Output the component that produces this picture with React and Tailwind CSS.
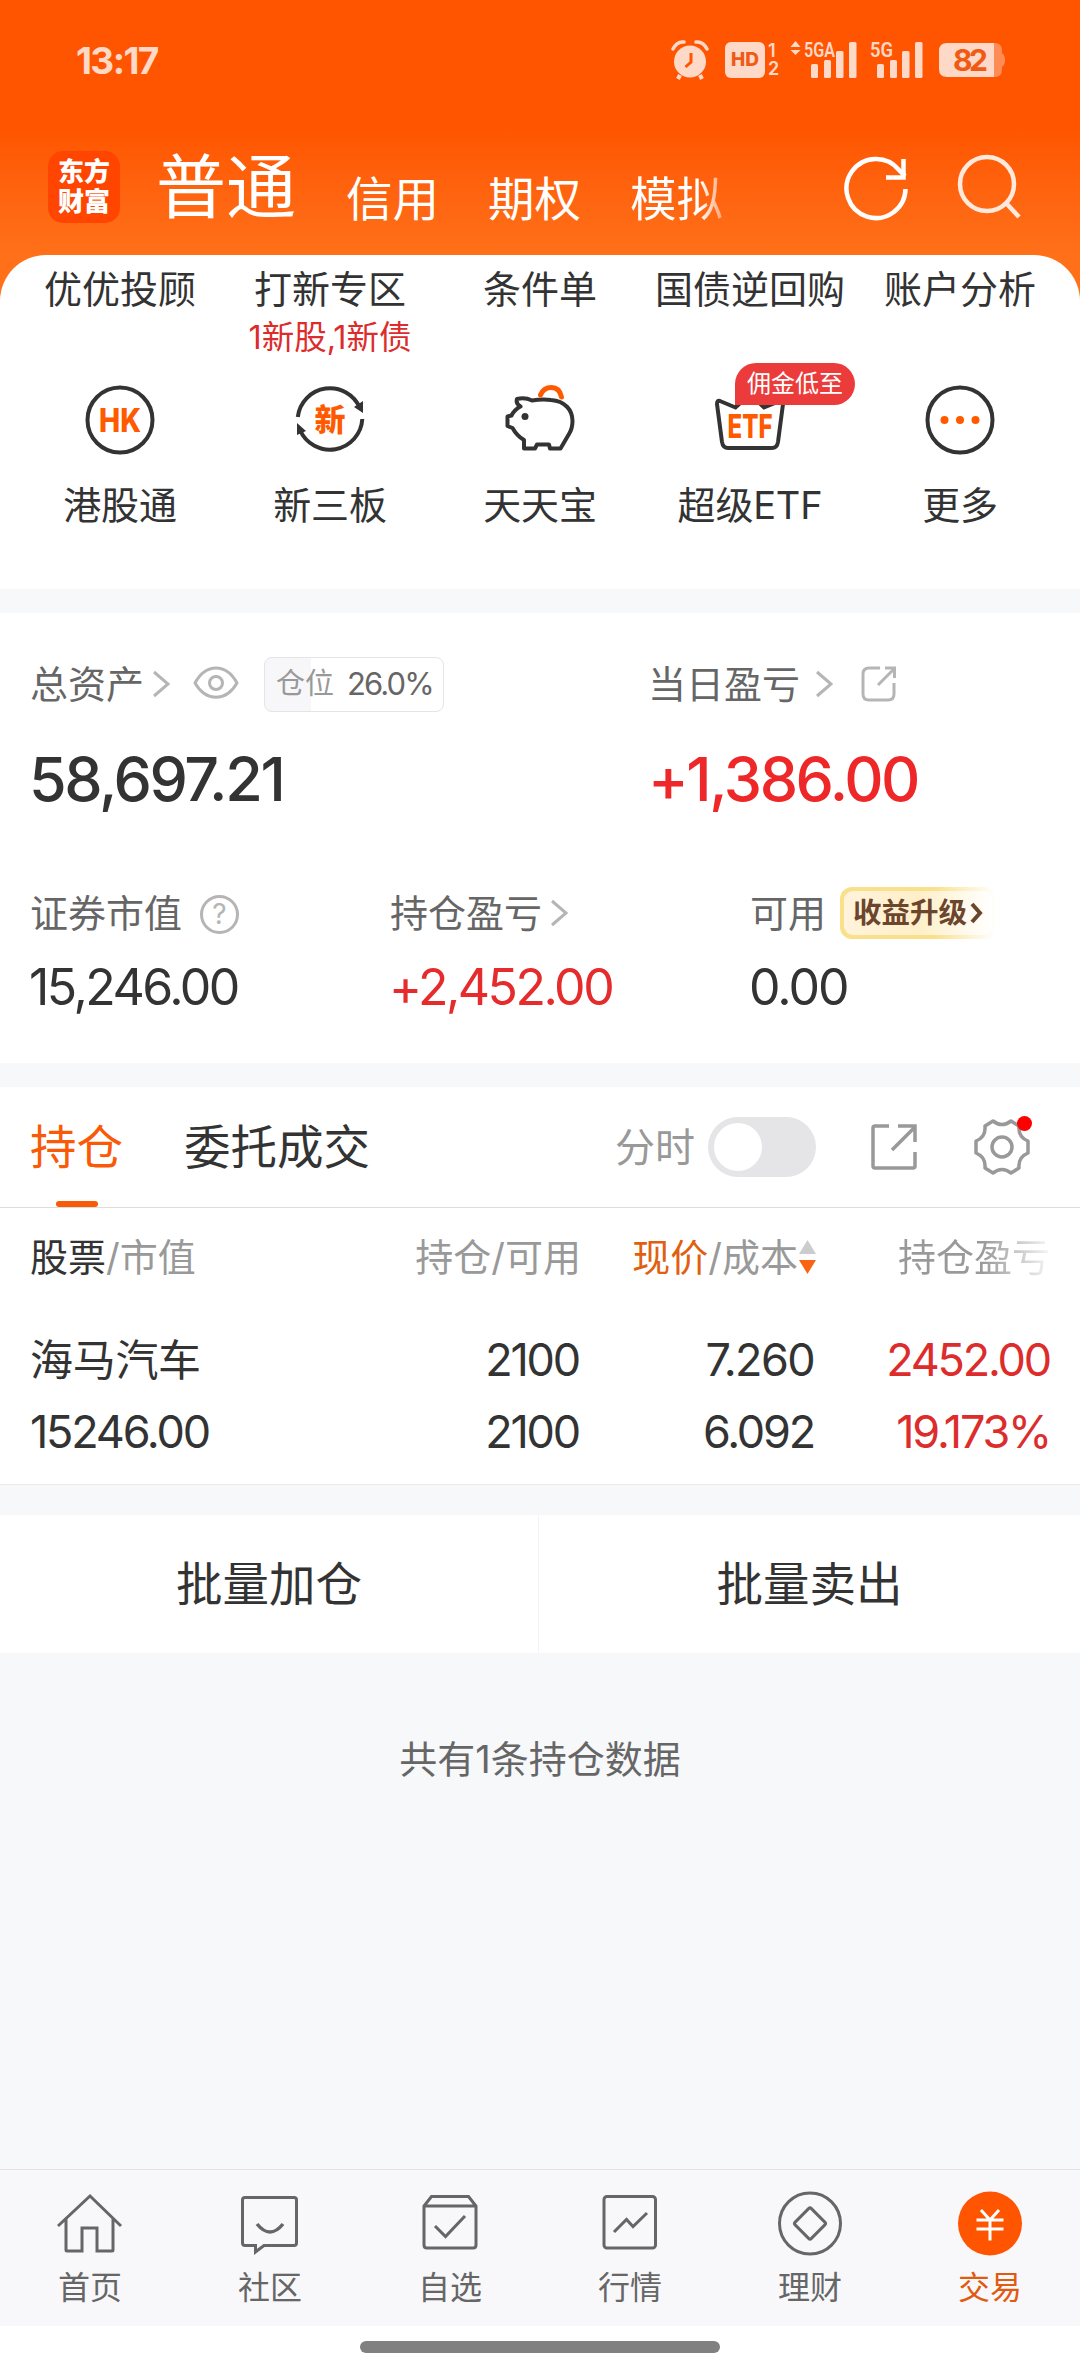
import React from 'react';

const shortcuts = [
  { top: "优优投顾", label: "港股通", icon: "hk" },
  { top: "打新专区", note: "1新股,1新债", label: "新三板", icon: "xin" },
  { top: "条件单", label: "天天宝", icon: "pig" },
  { top: "国债逆回购", label: "超级ETF", icon: "etf", badge: "佣金低至" },
  { top: "账户分析", label: "更多", icon: "more" },
]

const tabs = [
  { name: "首页", icon: "home" },
  { name: "社区", icon: "chat" },
  { name: "自选", icon: "box" },
  { name: "行情", icon: "chart" },
  { name: "理财", icon: "coin" },
  { name: "交易", icon: "trade", active: true },
]

function Signal({ label, arrows }) {
  return (
    <svg className="overflow-visible" width="68" height="40" viewBox="0 0 68 40" fill="#ffd9c8">
      {arrows && <path d="M5.5 1l5 6h-10zM5.5 15l5-5h-10z" />}
      <text x="14" y="16.500" fontSize="21" fontWeight="600" textLength={arrows ? 31 : 23} lengthAdjust="spacingAndGlyphs" className="font-['Roboto',sans-serif]">{label}</text>
      <rect x="21" y="24" width="7" height="14" rx="1.5" />
      <rect x="34" y="20" width="7" height="18" rx="1.5" />
      <rect x="46" y="11" width="7.5" height="27" rx="1.5" />
      <rect x="59" y="2" width="7.5" height="36" rx="1.5" />
    </svg>
  )
}

function StatusBar() {
  return (
    <div className="flex h-[120px] items-center justify-between pl-[76px] pr-[75px] text-[#ffd9c8]">
      <div className="text-[37px] font-bold leading-none tracking-[-1.6px]">13:17</div>
      <div className="flex items-center">
        <svg className="-ml-0.5 mr-0.5" width="38" height="40" viewBox="0 0 38 40" fill="#ffd9c8">
          <circle cx="19" cy="21.5" r="16" />
          <path d="M2 9q4-8 11-7M36 9q-4-8-11-7" stroke="#ffd9c8" strokeWidth="3.5" fill="none" strokeLinecap="round" />
          <path d="M9 35l-2 4M29 35l2 4" stroke="#ffd9c8" strokeWidth="4" />
          <path d="M20 13v9l-5.500 5" stroke="#ff5500" strokeWidth="3" fill="none" />
        </svg>
        <div className="ml-[14px] flex h-9 w-10 items-center justify-center rounded-md bg-[#ffd9c8] text-[19px] font-extrabold text-[#f05a14]">HD</div>
        <div className="ml-[3px] w-[10px] text-[18px] font-semibold leading-[18px]">
          <div>1</div>
          <div>2</div>
        </div>
        <div className="ml-3 flex">
          <Signal label="5GA" arrows />
          <div className="-ml-0.5"><Signal label="5G" /></div>
        </div>
        <svg className="ml-[15px]" width="66" height="34" viewBox="0 0 66 34">
          <path d="M54 0h2q7 0 7 8v2q3 2 3 7t-3 7v2q0 8-7 8h-2z" fill="#ff8c55" />
          <path d="M8 0h47v34H8q-8 0-8-8V8q0-8 8-8z" fill="#ffd9c8" />
          <text x="14" y="27.500" fontSize="30" fontWeight="700" fill="#f05a14" textLength="35" className="font-['Inter',sans-serif]">82</text>
        </svg>
      </div>
    </div>
  )
}

function Header() {
  return (
    <div className="flex h-[135px] pl-12 pr-[58px] text-white">
      <div className="mt-[31px] flex h-[72px] w-[72px] flex-col items-center justify-center rounded-[15px] bg-[#ff4500] text-[26px] font-black leading-[30px]">
        <span>东方</span>
        <span>财富</span>
      </div>
      <div className="ml-[36px] mt-[32px] text-[70px] leading-[72px]">普通</div>
      <div className="ml-[50px] mt-[54px] flex w-[404px] gap-[49px] text-[46.500px] leading-[50px]">
        <span>信用</span>
        <span>期权</span>
        <span className="bg-gradient-to-r from-white from-75% to-[#ffa070] bg-clip-text text-transparent">模拟</span>
      </div>
      <svg className="ml-auto mt-[34px]" width="68" height="68" viewBox="0 0 68 68" fill="none" stroke="#fff" strokeWidth="4.500">
        <path d="M63.500 35A29.500 29.500 0 1 1 57 16L63 22" />
        <path d="M61.500 5v18.500H44" />
      </svg>
      <svg className="ml-[44px] mt-[32px]" width="68" height="68" viewBox="0 0 68 68" fill="none" stroke="#ffe9dd" strokeWidth="4.500">
        <circle cx="33" cy="32" r="27" />
        <path d="M52 51l13 14" />
      </svg>
    </div>
  )
}

function ShortcutIcon({ name }) {
  const line = { fill: "none", stroke: "#333", strokeWidth: 4 }
  return (
    <svg width="72" height="72" viewBox="0 0 72 72">
      {name === "hk" && <>
        <circle cx="36" cy="36" r="32.500" {...line} />
        <text x="15" y="47.500" fontSize="32" fontWeight="800" fill="#ff5a00" textLength="42" lengthAdjust="spacingAndGlyphs" className="font-['Inter',sans-serif]">HK</text>
      </>}
      {name === "xin" && <>
        <path d="M3.800 33A32.500 32.500 0 0 1 66 24M68.300 35A32.500 32.500 0 0 1 6 46" {...line} />
        <path d="M69 17v12l-9-6zM3 51V39l9 8z" fill="#333" />
        <text x="36" y="47" textAnchor="middle" fontSize="31" fontWeight="900" fill="#ff5a00" className="font-['Noto_Sans_CJK_SC',sans-serif]">新</text>
      </>}
      {name === "pig" && <>
        <path d="M13 15q8-2 15 1.500Q38 15 47 16c14 1 21.500 10 21.500 21 0 5-1 9-3.500 13L56.500 64.500H46l-1-4H33l-2 4H20V56Q13 52 8.500 44l-5-2V32.500l4-1q3-6 9-9-5-3-3.500-7.500z" {...line} strokeLinejoin="round" />
        <path d="M36.500 11q3-7.500 11-7.500 8 0 10 9.500" fill="none" stroke="#ff5a00" strokeWidth="5" strokeLinecap="round" />
        <circle cx="21" cy="32.500" r="3.500" fill="#333" />
      </>}
      {name === "etf" && <>
        <path d="M3 20q0-4 3-3l15.500 6.500L36 10l14 13.500L66 17q4-1 3 3l-5 38q-1 6-6 6H14q-5 0-6-6z" {...line} />
        <text x="13.500" y="54" fontSize="32" fontWeight="800" fill="#ff5a00" textLength="45" lengthAdjust="spacingAndGlyphs" className="font-['Inter',sans-serif]">ETF</text>
      </>}
      {name === "more" && <>
        <circle cx="36" cy="36" r="32.500" {...line} />
        <g fill="#ff5a00">
          <circle cx="20.500" cy="36" r="4" />
          <circle cx="36" cy="36" r="4" />
          <circle cx="51.500" cy="36" r="4" />
        </g>
      </>}
    </svg>
  )
}

function Shortcuts() {
  return (
    <div className="bg-gradient-to-b from-[#ff7019] from-20% to-white to-20%">
      <div className="grid h-[334px] grid-cols-5 rounded-t-[46px] bg-white px-[15px]">
        {shortcuts.map((s) => (
          <div key={s.label} className="flex flex-col items-center whitespace-nowrap text-[38px] leading-[40px]">
            <div className="mt-[14px]">{s.top}</div>
            <div className="mt-[11px] h-[36px] text-[32.500px] leading-[36px] text-[#dc2c2c]">{s.note}</div>
            <div className="relative mt-[28px]">
              <ShortcutIcon name={s.icon} />
              {s.badge && <div className="absolute -top-[21px] left-[21px] h-[42px] w-[120px] rounded-[21px] rounded-bl-none bg-[#ec3b3b] text-center text-[24px] leading-[42px] text-white">{s.badge}</div>}
            </div>
            <div className="mt-[29px] tracking-[-0.2px]">{s.label}</div>
          </div>
        ))}
      </div>
    </div>
  )
}

function Chevron() {
  return (
    <svg width="18" height="28" viewBox="0 0 18 28" fill="none" stroke="#b5b5b5" strokeWidth="3">
      <path d="M2 2l14 12L2 26" />
    </svg>
  )
}

function Assets() {
  return (
    <div className="h-[450px] bg-white pt-[44px] text-[38px] text-[#666]">
      <div className="flex h-[54px]">
        <div className="flex w-[619px] items-center pl-[30px]">
          <span className="leading-[54px]">总资产</span>
          <div className="ml-[8px]"><Chevron /></div>
          <svg className="ml-[23px] -mt-0.5" width="46" height="34" viewBox="0 0 46 34" fill="none" stroke="#b5b5b5" strokeWidth="3">
            <path d="M2 17C13-3 33-3 44 17 33 36 13 36 2 17z" />
            <circle cx="23" cy="17" r="6.500" />
          </svg>
          <div className="ml-[25px] flex h-[55px] w-[180px] items-center rounded-[8px] border border-[#e4e4e6] bg-gradient-to-r from-[#f7f7fa] from-26% to-white to-26% pl-[11px]">
            <span className="text-[29px] text-[#999]">仓位</span>
            <span className="ml-[13px] text-[31px] tracking-[-1.9px]">26.0%</span>
          </div>
        </div>
        <div className="flex items-center pl-[29px]">
          <span className="leading-[54px]">当日盈亏</span>
          <div className="ml-[15px]"><Chevron /></div>
          <svg className="ml-[28px]" width="36" height="36" viewBox="0 0 36 36" fill="none" stroke="#b5b5b5" strokeWidth="3">
            <path d="M19 2H8Q2 2 2 8v20q0 6 6 6h19q6 0 6-6V17M17 19L33 3M24 2h9.500v10" />
          </svg>
        </div>
      </div>
      <div className="mt-[29px] flex h-[80px] items-center text-[61px] font-medium tracking-[-2.400px]">
        <div className="w-[619px] pl-[29px] text-[#333]">58,697.21</div>
        <div className="pl-[29px] text-[#ee2828]">+1,386.00</div>
      </div>
      <div className="mt-[66px] flex h-[54px] items-center">
        <div className="flex w-[360px] items-center pl-[30px]">
          <span className="leading-[54px]">证券市值</span>
          <div className="ml-[18px] mt-0.5 flex h-[39px] w-[39px] items-center justify-center rounded-full border-[3px] border-[#b5b5b5] text-[28px] text-[#b5b5b5]">?</div>
        </div>
        <div className="flex w-[360px] items-center pl-[30px]">
          <span className="leading-[54px]">持仓盈亏</span>
          <div className="ml-[8px]"><Chevron /></div>
        </div>
        <div className="flex items-center pl-[30px]">
          <span className="leading-[54px]">可用</span>
          <div className="ml-[14px] flex h-[52px] w-[156px] items-center rounded-[12px] bg-gradient-to-r from-[#fae08a] from-60% to-white p-[4px]">
            <div className="flex h-full w-full items-center rounded-[9px] bg-gradient-to-r from-[#fff3dc] via-[#ffefc8] to-white pl-[9px] text-[28.500px] font-bold text-[#6b452c]">
              收益升级
              <svg className="ml-[3px]" width="13" height="22" viewBox="0 0 13 22" fill="none" stroke="#6b452c" strokeWidth="4">
                <path d="M2 2l8 9-8 9" />
              </svg>
            </div>
          </div>
        </div>
      </div>
      <div className="mt-[19px] flex h-[56px] items-center text-[50px] tracking-[-2.500px] text-[#333]">
        <div className="w-[360px] pl-[29px]">15,246.00</div>
        <div className="w-[360px] pl-[29px] text-[#e52b2b]">+2,452.00</div>
        <div className="pl-[29px] tracking-[-2px]">0.00</div>
      </div>
    </div>
  )
}

function PositionTabs() {
  return (
    <div className="flex h-[121px] items-center border-b border-[#ddd] bg-white pl-[30px] text-[46.500px] text-[#333]">
      <div className="relative flex h-full items-center pt-0.5 text-[#f95a08]">
        持仓
        <div className="absolute bottom-0 left-[26px] h-[6px] w-[42px] rounded-full bg-[#f95a08]"></div>
      </div>
      <div className="ml-[61px] pt-0.5">委托成交</div>
      <div className="ml-auto pt-0.5 text-[40px] text-[#999]">分时</div>
      <div className="ml-[13px] h-[60px] w-[108px] rounded-full bg-[#e5e5e7] p-[6px]">
        <div className="h-12 w-12 rounded-full bg-white"></div>
      </div>
      <svg className="ml-[55px]" width="46" height="46" viewBox="0 0 46 46" fill="none" stroke="#999" strokeWidth="3.500">
        <path d="M18 2H4Q2 2 2 4v38q0 2 2 2h38q2 0 2-2V28M21 26L43 4M27 2h17v16" />
      </svg>
      <div className="relative ml-[57px] mr-[50px]">
        <svg width="56" height="56" viewBox="0 0 56 56" fill="none" stroke="#999" strokeWidth="3.500" strokeLinejoin="round">
          <path d="M19 2q9 7 18 0l8 5q-1 11 9 15v12q-10 4-9 15l-8 5q-9-7-18 0l-8-5q1-11-9-15V22q10-4 9-15z" />
          <circle cx="28" cy="28" r="10" />
        </svg>
        <div className="absolute -right-[2px] -top-[3px] h-[15px] w-[15px] rounded-full bg-[#ff0000]"></div>
      </div>
    </div>
  )
}

function Positions() {
  return (
    <div className="h-[277px] border-b border-[#eaeaec] bg-white pl-[30px] pr-[30px] text-[#333]">
      <div className="flex h-[98px] items-center whitespace-nowrap text-[38px] text-[#999]">
        <div className="w-[320px]"><span className="text-[#333]">股票</span>/市值</div>
        <div className="w-[231px] text-right">持仓/可用</div>
        <div className="flex w-[235px] items-center justify-end">
          <span className="text-[#e06010]">现价</span>/成本
          <svg className="ml-px" width="17" height="36" viewBox="0 0 17 36">
            <path d="M8.500 1L17 15H0z" fill="#ccc" />
            <path d="M8.500 35L17 21H0z" fill="#f96414" />
          </svg>
        </div>
        <div className="ml-auto bg-gradient-to-r from-[#999] from-55% to-[#f6f6f6] bg-clip-text text-transparent">持仓盈亏</div>
      </div>
      <div className="mt-[18px] flex h-[72px] items-center text-[45px] tracking-[-2.200px]">
        <div className="w-[320px] text-[43px] tracking-[-0.3px]">海马汽车</div>
        <div className="w-[229px] text-right">2100</div>
        <div className="w-[235px] text-right tracking-[-1.600px]">7.260</div>
        <div className="ml-auto text-[#dc2c2c]">2452.00</div>
      </div>
      <div className="flex h-[72px] items-center text-[45px] tracking-[-2.200px]">
        <div className="w-[320px]">15246.00</div>
        <div className="w-[229px] text-right">2100</div>
        <div className="w-[235px] text-right">6.092</div>
        <div className="ml-auto text-[#dc2c2c]">19.173%</div>
      </div>
    </div>
  )
}

function NavIcon({ name }) {
  return (
    <svg width="72" height="72" viewBox="0 0 72 72" fill="none" stroke="#666" strokeWidth="3">
      {name === "home" && <path d="M4 39L36 9l31 30M12 32v31q0 1 1 1h15V41h15v23h15q1 0 1-1V32" />}
      {name === "chat" && <>
        <path d="M11 10.500h49q2.500 0 2.500 2.500v43q0 2.500-2.500 2.500H30L21.500 65v-6.500H11Q8.500 58.500 8.500 56V13q0-2.500 2.500-2.500z" />
        <path d="M23 37q13 16 26 0" strokeWidth="3.500" />
      </>}
      {name === "box" && <>
        <path d="M17.500 9.500h37L62 19v39q0 3-3 3H13q-3 0-3-3V19zM10 19h52" />
        <path d="M21 39l10.500 10.500L51 29" />
      </>}
      {name === "chart" && <>
        <rect x="10" y="9.500" width="51.500" height="51.500" rx="3" />
        <path d="M20 45l12.500-12.500 6.500 7L53 26" />
      </>}
      {name === "coin" && <>
        <circle cx="36" cy="36.500" r="30.500" />
        <rect x="24.500" y="25" width="23" height="23" rx="2" transform="rotate(45 36 36.500)" />
      </>}
      {name === "trade" && <>
        <circle cx="36" cy="36.500" r="32" fill="#ff5500" stroke="none" />
        <path d="M27 23l9 10 9-10M22.500 33h27M22.500 42h27M36 33v20.500" stroke="#fff" />
      </>}
    </svg>
  )
}

function BottomNav() {
  return (
    <div>
      <div className="grid h-[157px] grid-cols-6 border-t border-[#e2e3e6] bg-[#f8f8fb] text-[32px] text-[#666]">
        {tabs.map((t) => (
          <div key={t.name} className={"flex flex-col items-center pt-[17px]" + (t.active ? " text-[#e05a10]" : "")}>
            <NavIcon name={t.icon} />
            <div className="mt-[9px] leading-[40px]">{t.name}</div>
          </div>
        ))}
      </div>
      <div className="flex h-12 justify-center bg-white pt-[15px]">
        <div className="h-3 w-[360px] rounded-full bg-[#808080]"></div>
      </div>
    </div>
  )
}

class App extends React.Component {
  render() {
    return (
      <div className="flex h-[2374px] w-[1080px] flex-col bg-[#f7f8fa] font-['Inter','Noto_Sans_CJK_SC',sans-serif] text-[#333]">
        <div className="h-[255px] bg-gradient-to-b from-[#ff5500] from-50% to-[#ff7019]">
          <StatusBar />
          <Header />
        </div>
        <Shortcuts />
        <div className="mt-6"><Assets /></div>
        <div className="mt-6">
          <PositionTabs />
          <Positions />
        </div>
        <div className="mt-[30px] flex h-[138px] bg-white text-[46.500px]">
          <button className="w-[539px] border-r border-[#f3f3f5] pt-0.5">批量加仓</button>
          <button className="flex-1 pt-0.5">批量卖出</button>
        </div>
        <div className="mt-[78px] text-center text-[38px] text-[#666]">共有1条持仓数据</div>
        <div className="mt-auto"><BottomNav /></div>
      </div>
    )
  }
}

export default App;
